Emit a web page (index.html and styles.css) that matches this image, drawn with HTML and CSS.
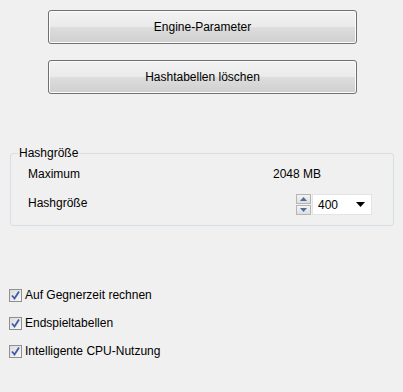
FILE: index.html
```html
<!DOCTYPE html>
<html lang="de">
<head>
    <meta charset="UTF-8">
    <meta name="viewport" content="width=device-width, initial-scale=1.0">
    <title>Engine</title>
    <link rel="stylesheet" href="styles.css">
</head>
<body>
    <div class="panel">
        <div class="actions">
            <button class="btn">Engine-Parameter</button>
            <button class="btn">Hashtabellen löschen</button>
        </div>

        <fieldset class="group">
            <legend>Hashgröße</legend>
            <div class="row">
                <span class="label label-max">Maximum</span>
                <span class="value">2048 MB</span>
            </div>
            <div class="row row-hash">
                <span class="label label-hash">Hashgröße</span>
                <div class="spin">
                    <div class="spin-btns">
                        <span class="spin-btn">
                            <svg width="7" height="4" viewBox="0 0 7 4"><path d="M0 4 L3.5 0 L7 4 Z" fill="#4f6b9c"/></svg>
                        </span>
                        <span class="spin-btn">
                            <svg width="7" height="4" viewBox="0 0 7 4"><path d="M0 0 L7 0 L3.5 4 Z" fill="#4f6b9c"/></svg>
                        </span>
                    </div>
                    <div class="combo">
                        <span>400</span>
                        <svg width="9" height="5" viewBox="0 0 9 5"><path d="M0 0 L9 0 L4.5 5 Z" fill="#000"/></svg>
                    </div>
                </div>
            </div>
        </fieldset>

        <div class="options">
            <label class="check"><span class="box"><svg width="11" height="11" viewBox="0 0 11 11"><path d="M2 5.5 L4.5 8.5 L9 1.5" fill="none" stroke="#3d5ca5" stroke-width="1.8"/></svg></span>Auf Gegnerzeit rechnen</label>
            <label class="check"><span class="box"><svg width="11" height="11" viewBox="0 0 11 11"><path d="M2 5.5 L4.5 8.5 L9 1.5" fill="none" stroke="#3d5ca5" stroke-width="1.8"/></svg></span>Endspieltabellen</label>
            <label class="check"><span class="box"><svg width="11" height="11" viewBox="0 0 11 11"><path d="M2 5.5 L4.5 8.5 L9 1.5" fill="none" stroke="#3d5ca5" stroke-width="1.8"/></svg></span>Intelligente CPU-Nutzung</label>
        </div>
    </div>
</body>
</html>
```

FILE: styles.css
```css
body {
    margin: 0;
    background-color: #f0f0f0;
    font-family: "Liberation Sans", Arial, sans-serif;
    font-size: 12px;
    color: #000;
}
.panel {
    width: 403px;
    height: 392px;
    padding-top: 10px;
    box-sizing: border-box;
}
.actions {
    display: flex;
    flex-direction: column;
    gap: 16px;
    padding-left: 48px;
}
.btn {
    width: 309px;
    height: 34px;
    border: 1px solid #707070;
    border-radius: 3px;
    background: linear-gradient(to bottom, #f2f2f2 0%, #ebebeb 48%, #dddddd 52%, #cfcfcf 100%);
    box-shadow: inset 0 0 0 1px #fcfcfc;
    font-family: inherit;
    font-size: 12px;
    color: #000;
    padding: 0;
}

/* group box */
.group {
    margin: 52px 9px 0 10px;
    padding: 6px 10px 9px 10px;
    border: 1px solid #d5dfe5;
    border-radius: 3px;
}
.group legend {
    padding: 0 1px;
    margin-left: -3px;
    line-height: 14px;
}
.row {
    display: flex;
    align-items: center;
    height: 16px;
}
.row-hash {
    align-items: flex-start;
    height: 22px;
    margin-top: 12px;
}
.label {
    padding-left: 7px;
    line-height: 16px;
}
.label-max {
    width: 245px;
}
.label-hash {
    width: 268px;
    margin-top: 1px;
}

/* spinner + combo */
.spin {
    display: flex;
    align-items: center;
    gap: 1px;
}
.spin-btns {
    display: flex;
    flex-direction: column;
    gap: 1px;
}
.spin-btn {
    display: flex;
    align-items: center;
    justify-content: center;
    width: 13px;
    height: 8px;
    border: 1px solid #b5b5b5;
    background: linear-gradient(to bottom, #f4f4f4, #dedede);
}
.combo {
    display: flex;
    align-items: center;
    justify-content: space-between;
    width: 60px;
    height: 21px;
    padding: 0 6px 0 5px;
    box-sizing: border-box;
    border: 1px solid #e3e3e3;
    background-color: #fff;
}

/* checkboxes */
.options {
    display: flex;
    flex-direction: column;
    gap: 14px;
    margin-top: 62px;
    padding-left: 9px;
}
.check {
    display: flex;
    align-items: center;
    gap: 3px;
    height: 14px;
    line-height: 14px;
}
.box {
    display: flex;
    align-items: center;
    justify-content: center;
    width: 11px;
    height: 11px;
    border: 1px solid #8f8f8f;
    background: linear-gradient(135deg, #dcdcdc, #f8f8f8);
}
```
